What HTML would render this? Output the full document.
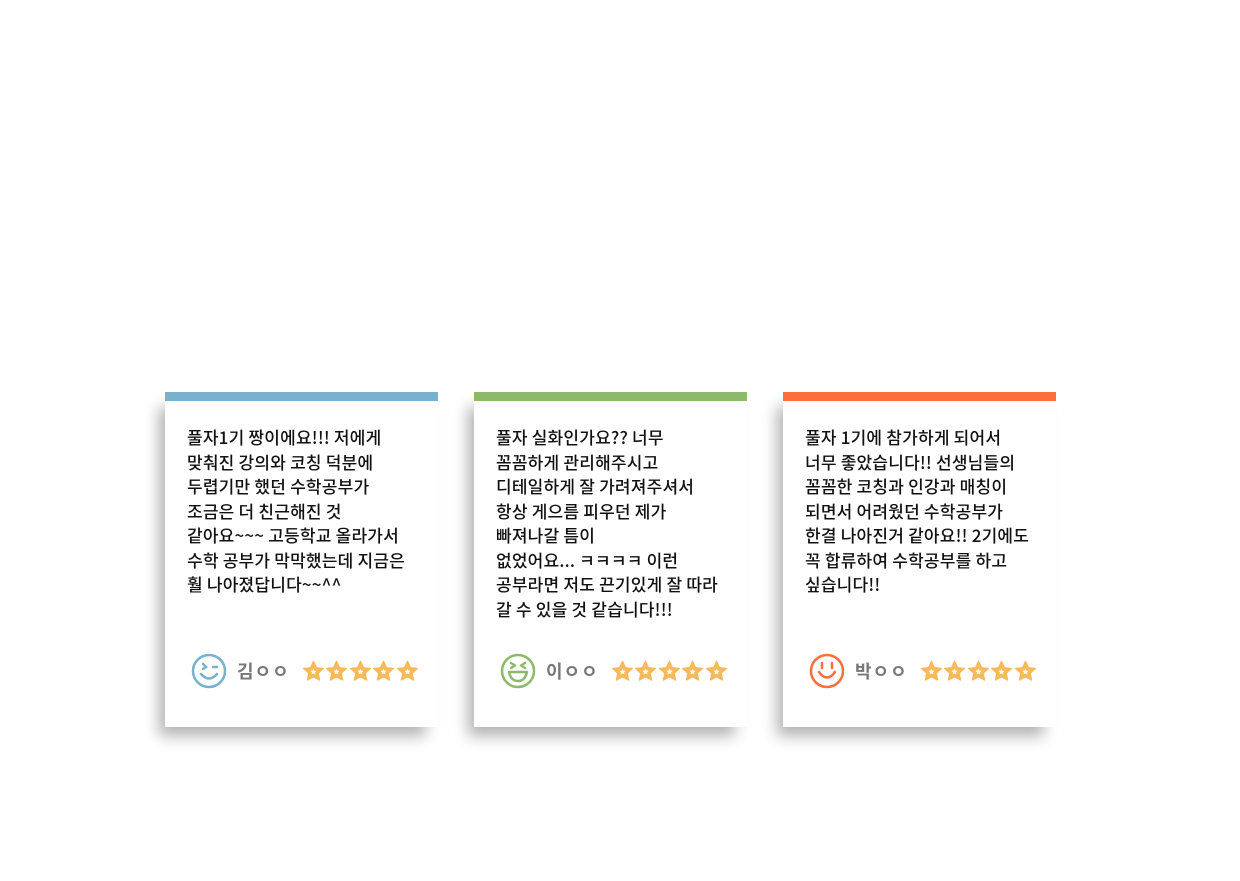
<!DOCTYPE html>
<html><head><meta charset="utf-8"><style>
body{margin:0;width:1240px;height:881px;background:#fff;position:relative;overflow:hidden;font-family:"Liberation Sans","Noto Sans CJK KR",sans-serif}
.card{position:absolute;top:392px;width:273px;height:335px;background:#fff;box-shadow:-9px 12px 14px -3px rgba(0,0,0,.3)}
.bar{height:9px}
.txt{position:absolute;left:22px;top:33px;font-family:"Noto Sans CJK KR",sans-serif;font-size:17px;line-height:24.5px;color:#111;font-weight:500;letter-spacing:0.2px;white-space:nowrap}
.foot{position:absolute;left:26px;top:261px;height:36px;display:flex;align-items:center}
.name{font-family:"Noto Sans CJK KR",sans-serif;font-size:18px;font-weight:bold;color:#777;margin-left:10px;margin-right:12px;letter-spacing:1px}
.stars{display:flex;gap:0.5px}
</style></head><body>
<svg width="0" height="0" style="position:absolute"><defs>
<symbol id="st" viewBox="0 0 24 24"><path d="M12 1.5l3 6.6 7.2.8-5.4 4.9 1.5 7.1L12 17.3l-6.3 3.6 1.5-7.1L1.8 8.9 9 8.1z" fill="#f7b95a" stroke="#f7b95a" stroke-width="1.5" stroke-linejoin="round"/><path d="M12 9l1 2 2.2.3-1.6 1.5.4 2.2-2-1.1-2 1.1.4-2.2-1.6-1.5 2.2-.3z" fill="#fff"/></symbol>
</defs></svg>

<div class="card" style="left:165px"><div class="bar" style="background:#77b1ce"></div>
<div class="txt">풀자1기 짱이에요!!! 저에게<br>맞춰진 강의와 코칭 덕분에<br>두렵기만 했던 수학공부가<br>조금은 더 친근해진 것<br>같아요~~~ 고등학교 올라가서<br>수학 공부가 막막했는데 지금은<br>훨 나아졌답니다~~^^</div>
<div class="foot"><svg width="36" height="36" viewBox="0 0 36 36"><circle cx="18" cy="18" r="16" fill="none" stroke="#77b1ce" stroke-width="2.5"/><path d="M12 11l3 3-3 2M22 14h4M10 21q8 9 16 0" fill="none" stroke="#77b1ce" stroke-width="2.5" stroke-linecap="round"/></svg><span class="name">김ㅇㅇ</span><div class="stars"><svg width="23" height="23"><use href="#st"/></svg><svg width="23" height="23"><use href="#st"/></svg><svg width="23" height="23"><use href="#st"/></svg><svg width="23" height="23"><use href="#st"/></svg><svg width="23" height="23"><use href="#st"/></svg></div></div></div>

<div class="card" style="left:474px"><div class="bar" style="background:#8dba6a"></div>
<div class="txt">풀자 실화인가요?? 너무<br>꼼꼼하게 관리해주시고<br>디테일하게 잘 가려져주셔서<br>항상 게으름 피우던 제가<br>빠져나갈 틈이<br>없었어요... ㅋㅋㅋㅋ 이런<br>공부라면 저도 끈기있게 잘 따라<br>갈 수 있을 것 같습니다!!!</div>
<div class="foot"><svg width="36" height="36" viewBox="0 0 36 36"><circle cx="18" cy="18" r="16" fill="none" stroke="#8dba6a" stroke-width="2.5"/><path d="M11 10l4 2.5-4 2.5M25 10l-4 2.5 4 2.5M9 19h18q-2 9-9 9t-9-9z" fill="none" stroke="#8dba6a" stroke-width="2.5" stroke-linejoin="round" stroke-linecap="round"/></svg><span class="name">이ㅇㅇ</span><div class="stars"><svg width="23" height="23"><use href="#st"/></svg><svg width="23" height="23"><use href="#st"/></svg><svg width="23" height="23"><use href="#st"/></svg><svg width="23" height="23"><use href="#st"/></svg><svg width="23" height="23"><use href="#st"/></svg></div></div></div>

<div class="card" style="left:783px"><div class="bar" style="background:#fe6e3a"></div>
<div class="txt">풀자 1기에 참가하게 되어서<br>너무 좋았습니다!! 선생님들의<br>꼼꼼한 코칭과 인강과 매칭이<br>되면서 어려웠던 수학공부가<br>한결 나아진거 같아요!! 2기에도<br>꼭 합류하여 수학공부를 하고<br>싶습니다!!</div>
<div class="foot"><svg width="36" height="36" viewBox="0 0 36 36"><circle cx="18" cy="18" r="16" fill="none" stroke="#fe6e3a" stroke-width="2.5"/><path d="M13 10v5M23 10v5M10 19q8 11 16 0" fill="none" stroke="#fe6e3a" stroke-width="2.5" stroke-linecap="round"/></svg><span class="name">박ㅇㅇ</span><div class="stars"><svg width="23" height="23"><use href="#st"/></svg><svg width="23" height="23"><use href="#st"/></svg><svg width="23" height="23"><use href="#st"/></svg><svg width="23" height="23"><use href="#st"/></svg><svg width="23" height="23"><use href="#st"/></svg></div></div></div>
</body></html>
